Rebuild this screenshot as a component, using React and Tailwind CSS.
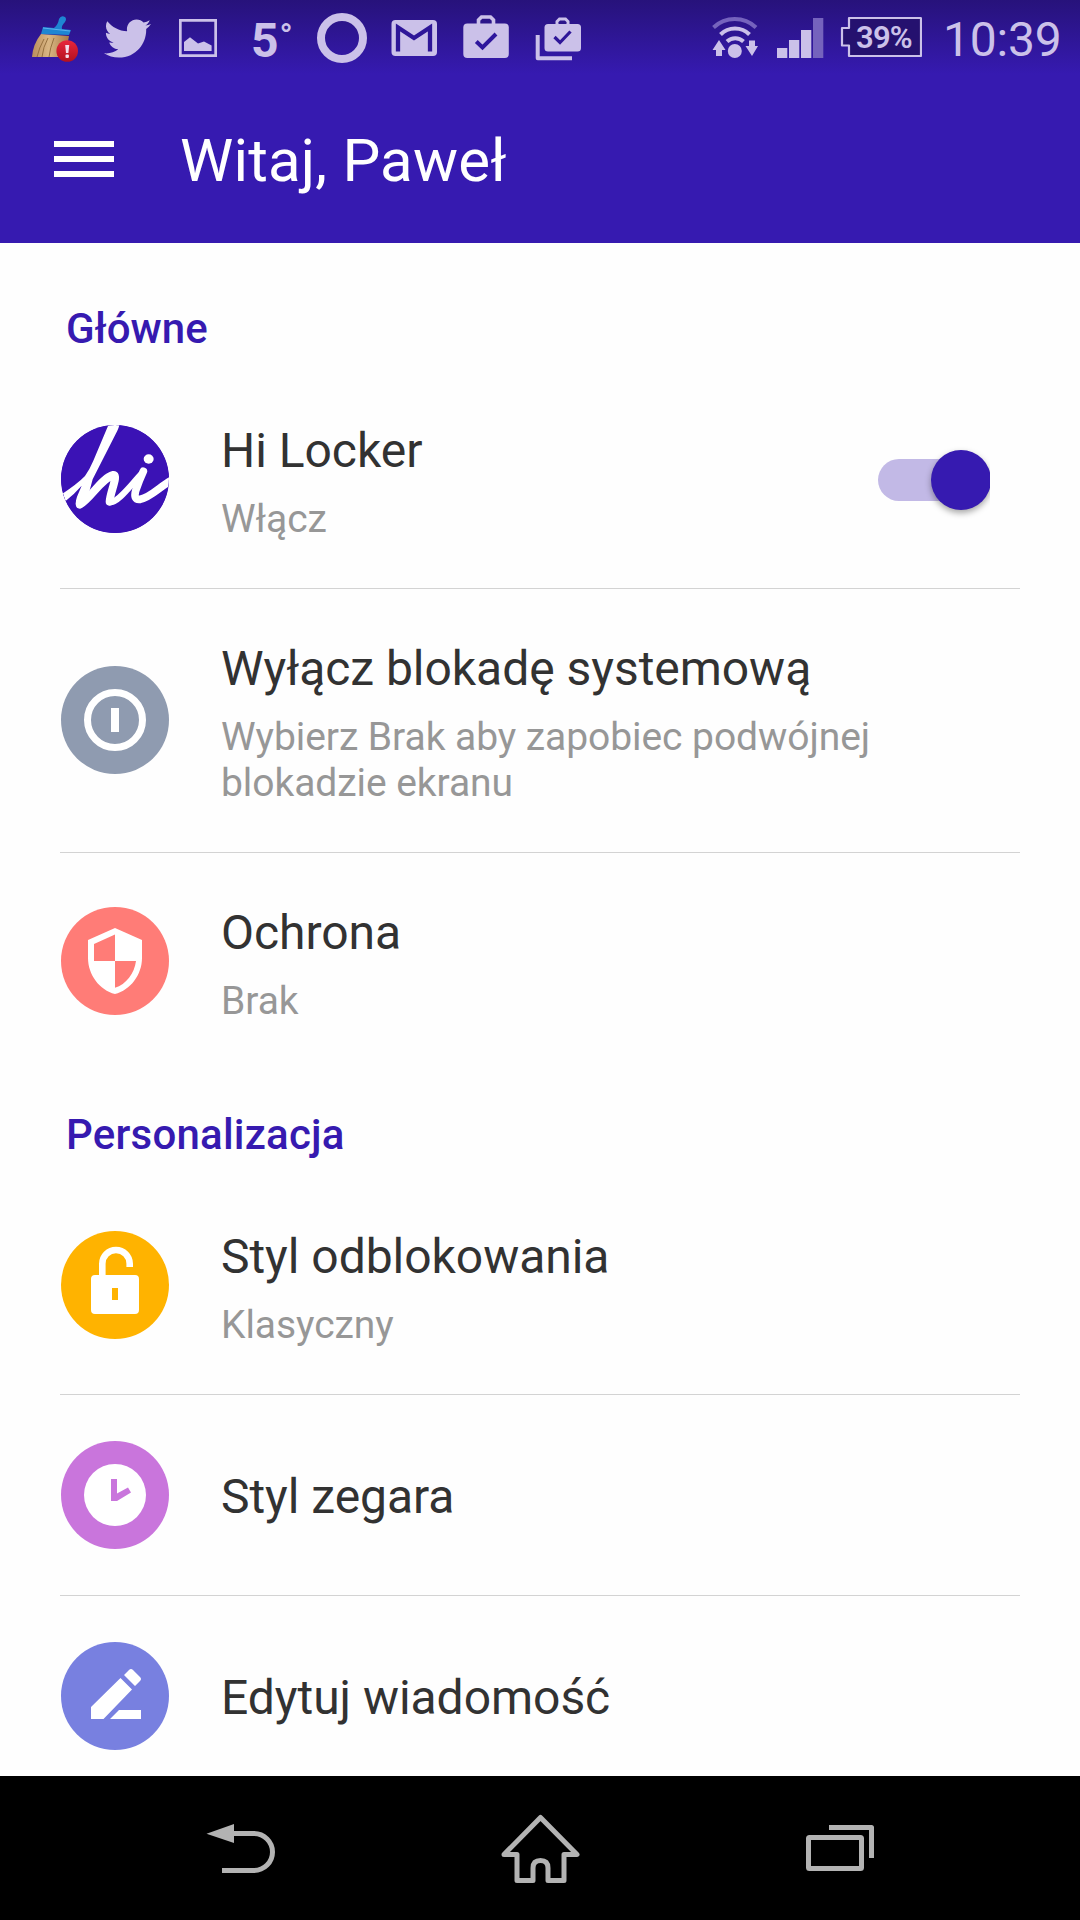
import React from "react";
import { FaTwitter } from "react-icons/fa";
import { MdSecurity } from "react-icons/md";

const TINT = "#cbc1e9";

function Cell({ box, children }) {
  return (
    <svg className="h-[75px] w-[72px] shrink-0" viewBox={box} fill={TINT}>
      {children}
    </svg>
  );
}

function Broom() {
  return (
    <Cell box="18 0 72 75">
      <defs>
        <linearGradient id="bristle" x1="0" x2="1">
          <stop offset="0" stopColor="#b98e5c" />
          <stop offset=".45" stopColor="#d9b684" />
          <stop offset="1" stopColor="#a87b48" />
        </linearGradient>
        <linearGradient id="alert" x1="0" x2="0" y1="0" y2="1">
          <stop offset="0" stopColor="#e8263c" />
          <stop offset="1" stopColor="#b3101f" />
        </linearGradient>
      </defs>
      <path d="M41 34 L69 36 L65 57 L32 57 Q33 44 41 34Z" fill="url(#bristle)" />
      <path d="M42 57 Q43 47 48 38 M49 57 Q50 48 54 38 M37 57 Q39 48 44 39" fill="none" stroke="#96703f" strokeWidth="1" />
      <path d="M43 27 L54 28 Q58 25 59 19 Q61 15 65 17 Q67 19 65 22 Q61 26 62 29 L71 30 L69 35 L41 34Z" fill="#1e86d2" />
      <path d="M43 28 L70 31" stroke="#5ab2ee" strokeWidth="1" />
      <circle cx="67.2" cy="51" r="10.8" fill="url(#alert)" />
      <path d="M65.2 45h4l-.8 8h-2.4z" fill="#f3dcea" />
      <rect x="65.5" y="54.5" width="3.4" height="3.4" rx="1" fill="#f3dcea" />
    </Cell>
  );
}

function StatusBar() {
  return (
    <div className="flex h-[75px] items-center bg-linear-to-b from-[#27127b] to-[#361ab1] pl-[18px] text-[#cbc1e9]">
      <Broom />
      <div className="flex w-[72px] shrink-0 justify-center pt-px pl-[3px]">
        <FaTwitter className="size-[47px]" />
      </div>
      <Cell box="162 0 72 75">
        <path fillRule="evenodd" d="M179 19h38v38h-38z M181.700 21.700v32.600h32.600v-32.600z" />
        <path d="M184 51V42L190 37.300 198 43.500 204 41.500 211.600 45.500V51Z" />
      </Cell>
      <div className="flex w-[72px] shrink-0 items-start pt-[6px] pl-[17px] font-bold">
        <span className="text-[48px] leading-[56px]">5</span>
        <span className="ml-px pt-[2px] text-[34px] leading-[40px]">°</span>
      </div>
      <Cell box="306 0 72 75">
        <circle cx="342" cy="38" r="21" fill="none" stroke={TINT} strokeWidth="8" />
      </Cell>
      <Cell box="378 0 72 75">
        <rect x="391.500" y="20" width="45.500" height="36" rx="4" />
        <path d="M398 51.500V27.500L414 38 430 27.500V51.500" fill="none" stroke="#2e1698" strokeWidth="4.300" />
      </Cell>
      <Cell box="450 0 72 75">
        <rect x="463.300" y="23.500" width="45.500" height="34.500" rx="4" />
        <path d="M478.500 25V20L481.500 17H490.500L493.500 20V25" fill="none" stroke={TINT} strokeWidth="3.600" />
        <path d="M476.300 41.500L482.500 47.500 496 34" fill="none" stroke="#2f179d" strokeWidth="4" />
      </Cell>
      <Cell box="522 0 72 75">
        <path d="M537.700 35V58.300H572" fill="none" stroke={TINT} strokeWidth="4" strokeLinejoin="round" />
        <rect x="544.500" y="24" width="36.500" height="27.500" rx="3.500" />
        <path d="M557 25V21.500L559.500 19H565.500L568 21.500V25" fill="none" stroke={TINT} strokeWidth="3" />
        <path d="M554.500 37L560 42.500 570.500 31.500" fill="none" stroke="#2e1698" strokeWidth="3.200" />
      </Cell>

      <div className="ml-auto flex h-[75px] items-center pr-[18px]">
        <svg className="h-[75px] w-[48px]" viewBox="711 0 48 75" fill={TINT}>
          <path d="M713.500 27.500A31 31 0 0 1 756 27.500" fill="none" stroke="#7563bd" strokeWidth="4" />
          <path d="M720.500 34.500A20.500 20.500 0 0 1 749.500 34.500" fill="none" stroke={TINT} strokeWidth="4" />
          <path d="M727 41.500A12 12 0 0 1 743.500 41.500" fill="none" stroke={TINT} strokeWidth="4" />
          <circle cx="734.800" cy="51" r="7" />
          <path d="M719 40L725.500 50H722V56H716V50H712.500Z M752 56L745.500 46H749V40.500H755V46H758Z" />
        </svg>
        <svg className="ml-[18px] h-[75px] w-[47px]" viewBox="777 0 47 75" fill={TINT}>
          <rect x="777" y="48" width="10.300" height="10" />
          <rect x="789" y="40" width="10.300" height="18" />
          <rect x="801" y="30" width="10.300" height="28" />
          <rect x="813" y="18" width="10.300" height="40" fill="#7563bd" />
        </svg>
        <div className="relative ml-[16px] h-[75px] w-[82px]">
          <svg className="h-[75px] w-[82px]" viewBox="840 0 82 75">
            <path d="M850 18H920.500Q921 18 921 18.500V55.500Q921 56 920.500 56H849V45.500H842V28H849V18Z" fill="#25116f" stroke={TINT} strokeWidth="2.200" strokeLinejoin="round" />
          </svg>
          <span className="absolute top-[20px] left-[16px] text-[31px] leading-[36px] font-semibold tracking-[-0.8px]">39%</span>
        </div>
        <span className="ml-[21px] w-[119px] pt-[4px] text-[48px] leading-[56px] tracking-[-0.2px]">10:39</span>
      </div>
    </div>
  );
}

function HiLogo() {
  return (
    <svg className="size-[108px]" viewBox="63 75 324 324">
      <clipPath id="disc"><circle cx="225" cy="237" r="162" /></clipPath>
      <g clipPath="url(#disc)">
        <rect x="63" y="75" width="324" height="324" fill="#3b12b5" />
        <path d="M209 66L240 66Q238 80 232 92L158 238L150 268L132 317Q120 330 111 323Q103 314 111 290L125 257Q105 280 76 304L60 286Q112 252 135 228Q148 210 160 182Z" fill="#fff" />
        <g fill="none" stroke="#fff" strokeLinecap="round" strokeLinejoin="round">
          <path d="M120 313C150 298 184 234 220 225C236 224 210 278 209 305" strokeWidth="24" />
          <path d="M210 307C234 308 270 258 302 224" strokeWidth="18" />
          <path d="M310 214Q298 240 288 269Q278 301 301 298C332 292 362 258 396 240" strokeWidth="23" />
        </g>
        <ellipse cx="326" cy="177" rx="15" ry="14" fill="#fff" />
      </g>
    </svg>
  );
}

function PowerIcon() {
  return (
    <svg className="size-[72px]" viewBox="0 0 72 72">
      <circle cx="36" cy="36" r="27.500" fill="none" stroke="#fff" strokeWidth="7" />
      <rect x="32" y="24" width="8" height="24" fill="#fff" />
    </svg>
  );
}

function LockIcon() {
  return (
    <svg className="size-[72px] overflow-visible" viewBox="0 0 72 72">
      <path d="M23.300 28V14.700A13.700 13.700 0 0 1 50.700 14.700V18" fill="none" stroke="#fff" strokeWidth="6.600" />
      <path fillRule="evenodd" fill="#fff" d="M16 26H56Q60 26 60 30V61Q60 65 56 65H16Q12 65 12 61V30Q12 26 16 26Z M33 39V51H39V39Z" />
    </svg>
  );
}

function ClockIcon() {
  return (
    <svg className="size-[72px]" viewBox="0 0 72 72">
      <circle cx="36" cy="36" r="31" fill="#fff" />
      <path d="M32 20H38V34.500L49 28.500L52 33.500L38 42H32Z" fill="#c975dc" />
    </svg>
  );
}

function PencilIcon() {
  return (
    <svg className="size-[72px]" viewBox="0 0 72 72" fill="#fff">
      <path d="M12 59V47L41.500 18L53 29.500L24.500 59Z M45 15L50 10Q52 8 54 10L61 17Q63 19 61 21L56 26Z M31 59L40 50H62V59Z" />
    </svg>
  );
}

function Badge({ className, children }) {
  return (
    <div className={`flex size-[108px] shrink-0 items-center justify-center overflow-hidden rounded-full ${className}`}>
      {children}
    </div>
  );
}

function Toggle() {
  return (
    <div className="relative mr-[30px] mb-px h-[84px] w-[112px] shrink-0 overflow-hidden">
      <div className="mt-[22px] h-[42px] w-[108px] rounded-full bg-[#c2b9e6]" />
      <div className="absolute top-[12.5px] -right-[0.5px] size-[60px] rounded-full bg-[#361ab0] shadow-[0_3px_6px_rgba(0,0,0,0.35)]" />
    </div>
  );
}

function Row({ icon, badge, title, note, divider, toggle }) {
  return (
    <div className={`mx-[60px] flex items-center pl-px ${divider ? "border-b border-[#d3d3d3]" : ""}`}>
      <Badge className={`${badge} ${note ? "mb-px" : ""}`}>{icon}</Badge>
      <div className={`ml-[52px] flex-1 ${note ? "pt-[52px] pb-[46px]" : "pt-[74px] pb-[70px]"}`}>
        <div className="text-[48px] leading-[56px] tracking-[-0.04px] text-[#323232]">{title}</div>
        {note && (
          <div className="mt-[17px] max-w-[680px] text-[39px] leading-[46px] tracking-[-0.06px] text-[#979797]">{note}</div>
        )}
      </div>
      {toggle && <Toggle />}
    </div>
  );
}

function Section({ children, className }) {
  return (
    <h2 className={`flex items-end pb-[17px] pl-[66px] text-[42px] leading-[50px] font-medium text-[#361ab0] ${className}`}>
      {children}
    </h2>
  );
}

function NavBar() {
  return (
    <nav className="flex h-[144px] shrink-0 bg-black">
      <div className="flex flex-1 pl-[204px]">
        <svg className="h-[144px] w-[75px]" viewBox="204 1776 75 144">
          <path d="M206.500 1833.700L234 1824V1843Z" fill="#b3b3b3" />
          <path d="M232 1833.500H254A18.500 18.500 0 0 1 254 1870.500H222" fill="none" stroke="#b3b3b3" strokeWidth="5" />
        </svg>
      </div>
      <svg className="h-[144px] w-[80px]" viewBox="500.5 1776 80 144">
        <path d="M540 1817.500L576.500 1854.500H563.500V1880.500H547.500V1868Q547.500 1860.500 540 1860.500Q532.500 1860.500 532.500 1868V1880.500H516.500V1854.500H503.500Z" fill="none" stroke="#b3b3b3" strokeWidth="5" strokeLinejoin="round" />
      </svg>
      <div className="flex flex-1 justify-end pr-[202px]">
        <svg className="h-[144px] w-[75px]" viewBox="803 1776 75 144">
          <rect x="808.500" y="1837.500" width="53" height="31" rx="1" fill="none" stroke="#b3b3b3" strokeWidth="5" />
          <path d="M829 1827.500H871.500V1858" fill="none" stroke="#b3b3b3" strokeWidth="5" strokeLinejoin="round" />
        </svg>
      </div>
    </nav>
  );
}

export default function App() {
  return (
    <div className="flex h-[1920px] w-[1080px] flex-col overflow-hidden bg-[#fefefe] font-['Roboto',sans-serif]">
      <header className="h-[243px] shrink-0 bg-[#361ab0]">
        <StatusBar />
        <div className="flex h-[168px] items-center pl-[54px] text-white">
          <div className="flex w-[60px] flex-col gap-[9px]">
            <span className="h-[6px] bg-white" />
            <span className="h-[6px] bg-white" />
            <span className="h-[6px] bg-white" />
          </div>
          <h1 className="ml-[66px] pt-[4px] text-[60px] leading-[70px] tracking-[0.18px]">Witaj, Paweł</h1>
        </div>
      </header>
      <main className="min-h-0 flex-1 overflow-hidden">
        <Section className="h-[128px]">Główne</Section>
        <Row icon={<HiLogo />} badge="bg-[#3b12b5]" title="Hi Locker" note="Włącz" divider toggle />
        <Row
          icon={<PowerIcon />}
          badge="bg-[#8f9bb0]"
          title="Wyłącz blokadę systemową"
          note="Wybierz Brak aby zapobiec podwójnej blokadzie ekranu"
          divider
        />
        <Row icon={<MdSecurity className="size-[72px] text-white" />} badge="bg-[#ff7c77]" title="Ochrona" note="Brak" />
        <Section className="h-[107px] tracking-[0.22px]">Personalizacja</Section>
        <Row icon={<LockIcon />} badge="bg-[#ffb300]" title="Styl odblokowania" note="Klasyczny" divider />
        <Row icon={<ClockIcon />} badge="bg-[#c975dc]" title="Styl zegara" divider />
        <Row icon={<PencilIcon />} badge="bg-[#7880e0]" title="Edytuj wiadomość" />
      </main>
      <NavBar />
    </div>
  );
}
